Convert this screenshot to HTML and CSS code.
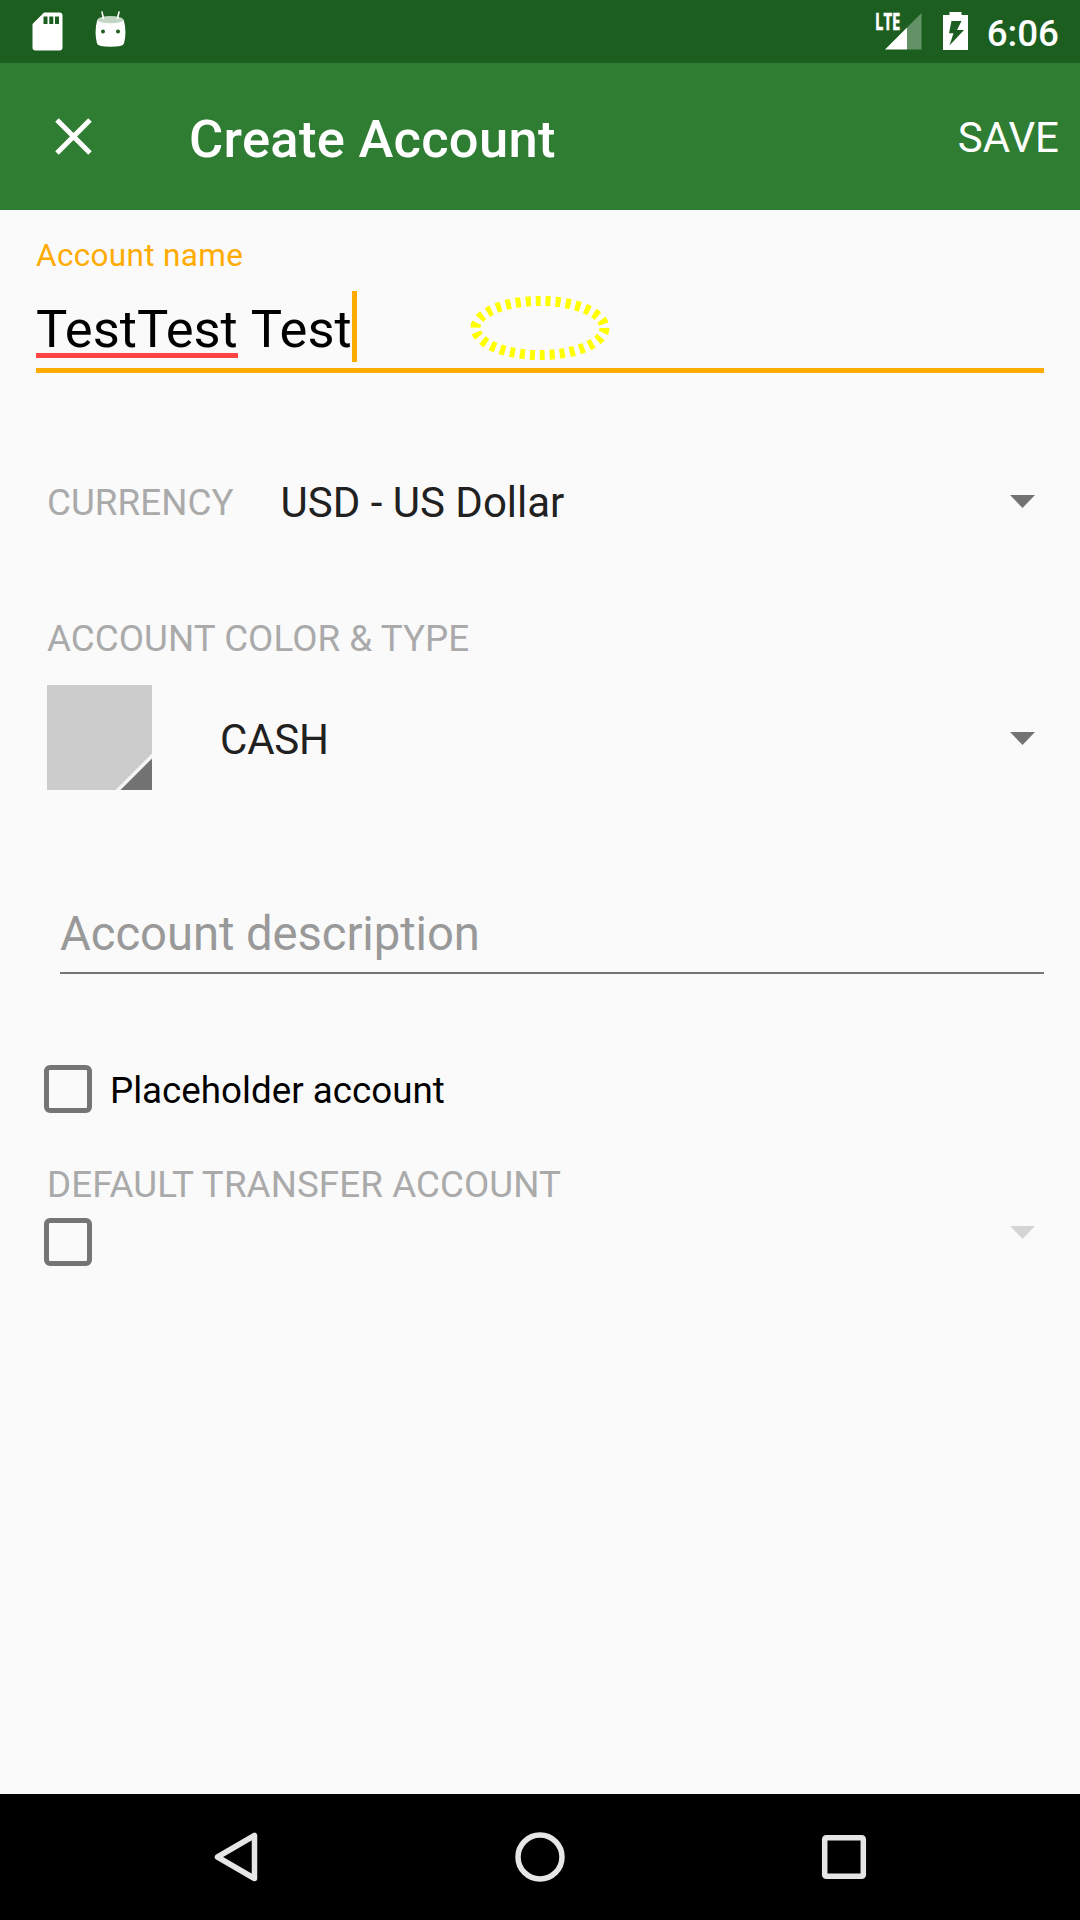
FILE: index.html
```html
<!DOCTYPE html>
<html lang="en">
<head>
<meta charset="utf-8">
<title>Create Account</title>
<link rel="stylesheet" href="styles.css">
</head>
<body>
<div class="screen">
  <header class="status">
    <div class="status-left">
      <svg width="32" height="40" viewBox="0 0 32 40"><path fill="#fff" fill-rule="evenodd" d="M12 .5H27.500a3 3 0 0 1 3 3V35.500a3 3 0 0 1-3 3H3.500a3 3 0 0 1-3-3V12zM11.500 4.500V12h4V4.500zM17.300 4.500V12h4V4.500zM23 4.500V12h4V4.500z"/></svg>
      <svg class="droid" width="32" height="38" viewBox="0 0 32 38"><path fill="#fff" d="M2.200 9Q15.500 15 28.800 9Q32 21 29 32.500Q28 35.700 15.500 35.700T2 32.500Q-1 21 2.200 9z"/><ellipse cx="15.500" cy="8.700" rx="13" ry="3.600" fill="#c3d6c4"/><path stroke="#fff" stroke-width="1.600" stroke-linecap="round" d="M7 1l1.500 6.500M24 1L22.500 7.500"/><circle cx="8" cy="20.500" r="2" fill="#1b5e20"/><circle cx="23" cy="20.500" r="2" fill="#1b5e20"/></svg>
    </div>
    <div class="status-right">
      <div class="signal">
        <svg width="37" height="37" viewBox="0 0 37 37"><path fill="#649267" d="M36.500 0V36.500H22V14.500z"/><path fill="#fff" d="M22 14.500V36.500H0z"/></svg>
        <span class="lte">LTE</span>
      </div>
      <svg class="battery" width="25" height="38" viewBox="0 0 25 38"><path fill="#fff" fill-rule="evenodd" d="M6.500 0H18.500V3H25V38H0V3H6.500zM8.500 9L6 21.300H10.500L6.500 33.500L21 18H14L18.500 9z"/></svg>
      <span class="clock">6:06</span>
    </div>
  </header>
  <div class="appbar">
    <svg class="close" width="38" height="38" viewBox="0 0 38 38"><path d="M2 2L35 35M35 2L2 35" stroke="#fff" stroke-width="5"/></svg>
    <h1 class="title">Create Account</h1>
    <span class="save">SAVE</span>
  </div>
  <main class="form">
    <label class="name-label">Account name</label>
    <div class="name-input"><span class="typo">TestTest</span>&nbsp;Test<i class="caret"></i>
      <svg class="touch" width="140" height="66" viewBox="0 0 140 66"><ellipse cx="70" cy="33" rx="64.500" ry="27" fill="none" stroke="#ff0" stroke-width="10" stroke-dasharray="5 5"/></svg>
    </div>
    <div class="row currency">
      <span class="caption">CURRENCY</span>
      <span class="value">USD - US Dollar</span>
      <svg class="arrow" width="26" height="13" viewBox="0 0 26 13"><path d="M0 0H25L12.500 13z"/></svg>
    </div>
    <div class="caption type-caption">ACCOUNT COLOR &amp; TYPE</div>
    <div class="row type">
      <svg width="105" height="105" viewBox="0 0 105 105"><path fill="#ccc" d="M0 0H105V105H0z"/><path fill="#f5f5f5" d="M105 68.500V105H68.500z"/><path fill="#727272" d="M105 73.500V105H73.500z"/></svg>
      <span class="value">CASH</span>
      <svg class="arrow" width="26" height="13" viewBox="0 0 26 13"><path d="M0 0H25L12.500 13z"/></svg>
    </div>
    <div class="description">Account description</div>
    <div class="check-row"><span class="box"></span><span class="check-label">Placeholder account</span></div>
    <div class="caption transfer-caption">DEFAULT TRANSFER ACCOUNT</div>
    <div class="row transfer">
      <span class="box"></span>
      <svg class="arrow disabled" width="26" height="13" viewBox="0 0 26 13"><path d="M0 0H25L12.500 13z"/></svg>
    </div>
  </main>
  <nav class="nav">
    <svg width="50" height="50" viewBox="0 0 50 50"><path d="M43.500 3.500V46.500L6.500 25z"/></svg>
    <svg width="50" height="50" viewBox="0 0 50 50"><circle cx="25" cy="25" r="22"/></svg>
    <svg width="50" height="50" viewBox="0 0 50 50"><rect x="5.700" y="5.700" width="38.600" height="38.600" rx="1.500"/></svg>
  </nav>
</div>
</body>
</html>
```
FILE: styles.css
```css
* { box-sizing: border-box; }
body { margin: 0; font-family: Roboto, sans-serif; background: #fafafa; }
svg { display: block; flex: none; }
.screen { width: 1080px; height: 1920px; display: flex; flex-direction: column; overflow: hidden; }

.status { height: 63px; background: #1b5e20; display: flex; justify-content: space-between; padding: 0 21px 0 32px; color: #fff; }
.status-left { display: flex; gap: 31px; padding-top: 12px; }
.droid { margin-top: -1px; }
.status-right { display: flex; }
.signal { position: relative; margin-top: 13px; margin-right: 21px; }
.lte { position: absolute; left: -10px; top: -3px; font: 700 22.5px/23px "Open Sans", sans-serif; transform: scaleX(.66); transform-origin: 0 0; -webkit-text-stroke: .5px #fff; }
.battery { margin-top: 12px; margin-right: 19px; }
.clock { font-size: 36.75px; font-weight: 500; line-height: 67px; }

.appbar { height: 147px; background: #2e7d32; display: flex; align-items: center; color: #fff; padding: 0 21px 0 55px; }
.title { margin: 4px 0 0 96px; font-size: 52.5px; font-weight: 500; line-height: 62px; letter-spacing: .28px; flex: 1; }
.save { font-size: 42px; line-height: 50px; margin-top: 2px; }

.form { flex: 1; padding: 27px 36px 0; display: flex; flex-direction: column; }
.name-label { font-size: 31.5px; line-height: 38px; letter-spacing: .33px; color: #ffab00; }
.name-input { position: relative; display: flex; height: 98px; padding-top: 19px; font-size: 52.5px; line-height: 71px; color: #000; border-bottom: 5px solid #ffab00; }
.typo { height: 64px; border-bottom: 5px solid #ff4444; }
.caret { width: 5px; height: 71px; margin-top: -3px; background: #ffab00; }
.touch { position: absolute; left: 434px; top: 20px; }

.row { display: flex; align-items: center; padding-right: 8px; }
.arrow { margin-left: auto; fill: #737373; }
.arrow.disabled { fill: #d4d4d4; margin-bottom: 19px; }
.caption { font-size: 36.75px; line-height: 44px; letter-spacing: .05px; color: #aaa; padding-left: 11px; }
.value { font-size: 42px; line-height: 50px; color: #212121; }
.currency { margin-top: 105px; height: 50px; }
.currency .value { margin-left: 47px; }
.currency .arrow { align-self: flex-start; margin-top: 17px; }
.type-caption { margin-top: 89px; }
.type { margin-top: 24px; padding-left: 11px; height: 105px; }
.type .value { margin-left: 68px; margin-top: 4px; letter-spacing: -.2px; }
.type .arrow { margin-top: 2px; }
.description { margin: 115px 0 0 24px; height: 69px; padding-top: 1px; font-size: 47.25px; line-height: 56px; letter-spacing: -.08px; color: #999; border-bottom: 2px solid #757575; }
.check-row { display: flex; align-items: center; margin-top: 91px; padding-left: 8px; height: 48px; }
.box { width: 48px; height: 48px; border: 5.5px solid #757575; border-radius: 6px; }
.check-label { margin: 4px 0 0 18px; font-size: 36.75px; line-height: 44px; color: #000; }
.transfer-caption { margin-top: 50px; letter-spacing: .08px; }
.transfer { margin-top: 11px; padding-left: 8px; }

.nav { height: 126px; background: #000; display: flex; align-items: center; justify-content: center; gap: 254px; }
.nav svg { fill: none; stroke: #e6e6e6; stroke-width: 5.5; stroke-linejoin: round; }
```
